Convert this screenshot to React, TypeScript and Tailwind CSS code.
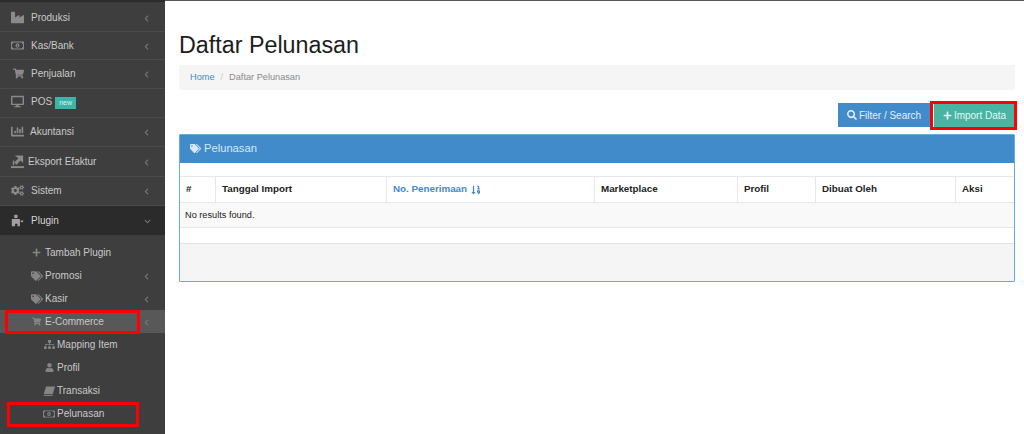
import { ReactNode } from "react"
import {
  FaIndustry, FaRegMoneyBillAlt, FaShoppingCart, FaDesktop, FaChartBar, FaCogs, FaPlus, FaTags,
  FaSitemap, FaUser, FaSearch, FaChevronLeft, FaChevronDown, FaSortNumericDown,
} from "react-icons/fa"

const ExportIcon = () => (
  <svg viewBox="0 0 16 16" className="w-[15px] h-[15px]" fill="currentColor">
    <path d="M1 13h14v2H1z" />
    <path d="M5 1.500h9v8l-2.800-2.600L7 11.500 4.500 9 9 4.500z" />
    <path d="M3 7h1.500v5H3z" />
  </svg>
)

const PluginIcon = () => (
  <svg viewBox="0 0 16 16" className="w-[13px] h-[13px]" fill="currentColor">
    <path d="M4 1h4v4H4z" />
    <path d="M1 6h10v9H8v-3H5v3H1z" />
    <path d="M12 8h3v2h-3z" />
  </svg>
)

const LedgerIcon = () => (
  <svg viewBox="0 0 16 16" className="w-[12px] h-[12px]" fill="currentColor">
    <path d="M4 2h12l-3 10H1z" />
    <path d="M1 13h12v1.500H1z" />
  </svg>
)

const topItems: { label: string; icon: ReactNode; iconClass: string; h: string; pb: string; arrow?: boolean; badge?: boolean }[] = [
  { label: "Produksi", icon: <FaIndustry size={13} />, iconClass: "w-[31px] pl-[11px]", h: "h-[29px]", pb: "", arrow: true },
  { label: "Kas/Bank", icon: <FaRegMoneyBillAlt size={13} />, iconClass: "w-[31px] pl-[11px]", h: "h-[28px]", pb: "pb-[1px]", arrow: true },
  { label: "Penjualan", icon: <FaShoppingCart size={11} />, iconClass: "w-[31px] pl-[13px]", h: "h-[29px]", pb: "pb-[1px]", arrow: true },
  { label: "POS", icon: <FaDesktop size={13} />, iconClass: "w-[31px] pl-[11px]", h: "h-[29px]", pb: "pb-[3px]", badge: true },
  { label: "Akuntansi", icon: <FaChartBar size={13} />, iconClass: "w-[30px] pl-[11px]", h: "h-[29px]", pb: "pb-[1px]", arrow: true },
  { label: "Eksport Efaktur", icon: <ExportIcon />, iconClass: "w-[28px] pl-[10px]", h: "h-[30px]", pb: "pb-[1px]", arrow: true },
  { label: "Sistem", icon: <FaCogs size={13} />, iconClass: "w-[31px] pl-[11px]", h: "h-[29px]", pb: "pb-[1px]", arrow: true },
]

const subItems: { label: string; icon: ReactNode; pl: string; gap: string; arrow?: boolean; active?: boolean }[] = [
  { label: "Tambah Plugin", icon: <FaPlus size={9} />, pl: "pl-[30px]", gap: "ml-[3px]" },
  { label: "Promosi", icon: <FaTags size={12} />, pl: "pl-[31px]", gap: "ml-[2px]", arrow: true },
  { label: "Kasir", icon: <FaTags size={12} />, pl: "pl-[31px]", gap: "ml-[2px]", arrow: true },
  { label: "E-Commerce", icon: <FaShoppingCart size={9} />, pl: "pl-[30px]", gap: "ml-[3px]", arrow: true, active: true },
  { label: "Mapping Item", icon: <FaSitemap size={11} />, pl: "pl-[43px]", gap: "ml-[2px]" },
  { label: "Profil", icon: <FaUser size={9} />, pl: "pl-[43px]", gap: "ml-[2px]" },
  { label: "Transaksi", icon: <LedgerIcon />, pl: "pl-[43px]", gap: "ml-[2px]" },
  { label: "Pelunasan", icon: <FaRegMoneyBillAlt size={12} />, pl: "pl-[43px]", gap: "ml-[2px]" },
]

const columns = [
  { label: "#", w: "w-[35px]" },
  { label: "Tanggal Import", w: "w-[171px]" },
  { label: "No. Penerimaan", w: "w-[208px]", sorted: true },
  { label: "Marketplace", w: "w-[143px]" },
  { label: "Profil", w: "w-[78px]" },
  { label: "Dibuat Oleh", w: "w-[140px]" },
  { label: "Aksi", w: "flex-1" },
]

function Sidebar() {
  return (
    <aside className="relative w-[165px] h-[434px] shrink-0 overflow-hidden bg-[#3e3e3e] text-[#c9c9c9] text-[10px]">
      <div className="h-[3px] bg-[#3a3a3a] border-t-2 border-[#2c2c2c]" />
      {topItems.map(item => (
        <div key={item.label} className={`${item.h} ${item.pb} flex items-center border-b border-[#4a4a4a]`}>
          <span className={`${item.iconClass} shrink-0 text-[#8a8a8a]`}>{item.icon}</span>
          <span>{item.label}</span>
          {item.badge && (
            <span className="ml-[3px] mt-[2px] px-[4px] h-[12px] leading-[12px] text-[7px] text-[#d8f5f0] bg-[#3cb5a8]">new</span>
          )}
          {item.arrow && <FaChevronLeft size={7} className="ml-auto mr-[15px] mt-[2px] text-[#757575]" />}
        </div>
      ))}
      <div className="h-[29px] flex items-center bg-[#2b2b2b] text-[#d5d5d5]">
        <span className="w-[31px] pl-[11px] shrink-0 text-[#a0a0a0]"><PluginIcon /></span>
        <span>Plugin</span>
        <FaChevronDown size={7} className="ml-auto mr-[14px] mt-[2px] text-[#757575]" />
      </div>
      <div className="pt-[6px]">
        {subItems.map(item => (
          <div key={item.label} className={`h-[23px] flex items-center ${item.pl} ${item.active ? "bg-[#585858]" : ""}`}>
            <span className="w-[12px] shrink-0 flex justify-center text-[#858585]">{item.icon}</span>
            <span className={item.gap}>{item.label}</span>
            {item.arrow && <FaChevronLeft size={7} className="ml-auto mr-[15px] mt-[2px] text-[#757575]" />}
          </div>
        ))}
      </div>
      <div className="absolute left-[5px] top-[310px] w-[135px] h-[24px] border-[3px] border-[#ff0000]" />
      <div className="absolute left-[7px] top-[402px] w-[132px] h-[25px] border-[3px] border-[#ff0000]" />
    </aside>
  )
}

function Panel() {
  return (
    <div className="h-[148px] border border-[#62afd3] rounded-[1px]">
      <div className="h-[28px] bg-[#428bca] flex items-center pl-[10px] pb-[2px] gap-[3px] text-[11.200px] text-[#d9e8f5]">
        <FaTags size={11} />
        <span>Pelunasan</span>
      </div>
      <div className="h-[13px]" />
      <div className="h-[27px] flex border-y border-[#e8e8e8] text-[9.800px] font-bold text-[#222]">
        {columns.map((col, i) => (
          <div key={col.label} className={`${col.w} flex items-center pl-[6px] ${i > 0 ? "border-l border-[#e8e8e8]" : ""}`}>
            {col.sorted ? (
              <span className="flex items-center gap-[4px] text-[#428bca]">
                {col.label}
                <FaSortNumericDown size={10} />
              </span>
            ) : col.label}
          </div>
        ))}
      </div>
      <div className="h-[25px] flex items-center pl-[5px] pt-[2px] bg-[#f9f9f9] border-b border-[#e8e8e8] text-[9.200px] text-[#222]">
        No results found.
      </div>
      <div className="h-[15px]" />
      <div className="h-[38px] bg-[#f5f5f5] border-t border-[#e3e3e3]" />
    </div>
  )
}

export default function App() {
  return (
    <div className="flex w-[1024px] h-[434px] overflow-hidden bg-white" style={{ fontFamily: '"Liberation Sans", Arial, sans-serif' }}>
      <Sidebar />
      <main className="flex-1 min-w-0">
        <div className="h-px bg-[#555]" />
        <div className="pl-[14px] pr-[9px]">
          <h1 className="mt-[30px] h-[28px] leading-[28px] text-[23.300px] text-[#1c1c1c]">Daftar Pelunasan</h1>
          <div className="mt-[6px] h-[25px] flex items-center bg-[#f5f5f5] rounded-[2px] pl-[11px] text-[9.200px]">
            <span className="text-[#428bca]">Home</span>
            <span className="mx-[6px] text-[#ccc]">/</span>
            <span className="text-[#8a8a8a]">Daftar Pelunasan</span>
          </div>
          <div className="relative mt-[13px] h-[24px] flex justify-end gap-[4px] text-[10px]">
            <button className="w-[92px] flex items-center justify-center gap-[2px] bg-[#428bca] text-[#e4eef8]">
              <FaSearch size={10} />
              Filter / Search
            </button>
            <button className="w-[81px] flex items-center justify-center gap-[2px] bg-[#47b4a4] text-[#e6f7f4]">
              <FaPlus size={9} />
              Import Data
            </button>
            <div className="absolute right-[-2px] top-[-2px] w-[87px] h-[29px] border-[3px] border-[#ff0000]" />
          </div>
          <div className="mt-[7px]">
            <Panel />
          </div>
        </div>
      </main>
    </div>
  )
}
